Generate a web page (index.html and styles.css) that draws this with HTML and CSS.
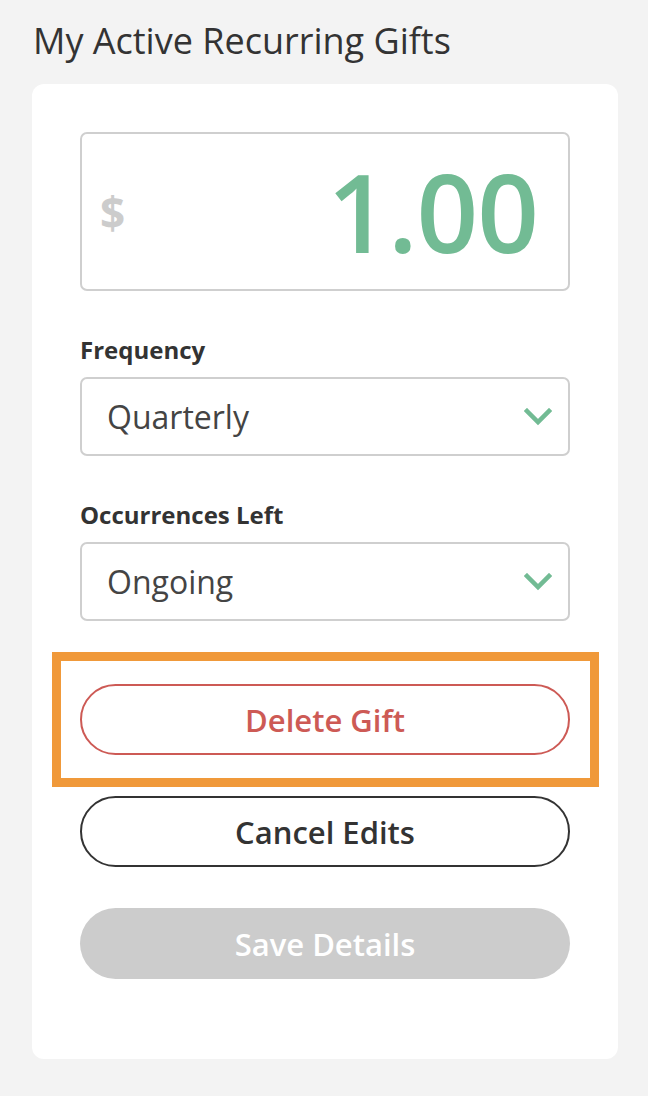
FILE: index.html
```html
<!DOCTYPE html>
<html lang="en">
<head>
    <meta charset="UTF-8">
    <meta name="viewport" content="width=device-width, initial-scale=1.0">
    <title>My Active Recurring Gifts</title>
    <link rel="stylesheet" href="styles.css">
</head>
<body>
    <div class="page">
        <h2 class="page-title">My Active Recurring Gifts</h2>

        <div class="gift-card">
            <div class="amount-box">
                <span class="currency">$</span>
                <span class="amount">1.00</span>
            </div>

            <label class="field-label">Frequency</label>
            <div class="select-box">
                <span>Quarterly</span>
                <svg class="chevron" viewBox="0 0 28 18" fill="none" stroke="#72bb94" stroke-width="4.5" stroke-linecap="square">
                    <path d="M3 3l11 11 11-11"></path>
                </svg>
            </div>

            <label class="field-label">Occurrences Left</label>
            <div class="select-box">
                <span>Ongoing</span>
                <svg class="chevron" viewBox="0 0 28 18" fill="none" stroke="#72bb94" stroke-width="4.5" stroke-linecap="square">
                    <path d="M3 3l11 11 11-11"></path>
                </svg>
            </div>

            <div class="actions">
                <div class="highlight">
                    <button class="btn btn-delete">Delete Gift</button>
                </div>
                <button class="btn btn-cancel">Cancel Edits</button>
                <button class="btn btn-save" disabled>Save Details</button>
            </div>
        </div>
    </div>
</body>
</html>
```

FILE: styles.css
```css
body {
    margin: 0;
    padding: 0;
    background-color: #f3f3f3;
    font-family: "Open Sans", Arial, sans-serif;
    color: #333;
}
.page {
    padding: 18px 30px 37px 32px;
}
.page-title {
    margin: 0 0 20px 1px;
    font-size: 36px;
    font-weight: 400;
    line-height: 46px;
    color: #333;
}
.gift-card {
    background: white;
    border-radius: 12px;
    padding: 48px 48px 80px 48px;
}
.amount-box {
    display: flex;
    align-items: center;
    justify-content: space-between;
    height: 155px;
    padding: 0 30px 0 18px;
    border: 2px solid #cfcfcf;
    border-radius: 7px;
}
.currency {
    font-size: 44px;
    font-weight: 700;
    color: #cccccc;
}
.amount {
    font-size: 108px;
    font-weight: 600;
    color: #72bb94;
    line-height: 1;
    letter-spacing: -1px;
}
.field-label {
    display: block;
    margin: 42px 0 11px 0;
    font-size: 24px;
    line-height: 33px;
    font-weight: 700;
    color: #333;
}
.select-box {
    display: flex;
    align-items: center;
    justify-content: space-between;
    height: 75px;
    padding: 0 16px 0 25px;
    border: 2px solid #cfcfcf;
    border-radius: 7px;
    font-size: 32px;
    color: #444;
}
.chevron {
    width: 28px;
    height: 18px;
}
.actions {
    display: flex;
    flex-direction: column;
    gap: 41px;
    margin-top: 63px;
}
.highlight {
    position: relative;
}
.highlight::before {
    content: "";
    position: absolute;
    top: -32px;
    bottom: -32px;
    left: -28px;
    right: -29px;
    border: 9px solid #f0993a;
}
.btn {
    display: block;
    width: 100%;
    height: 71px;
    border-radius: 36px;
    background: white;
    font-family: "Open Sans", Arial, sans-serif;
    font-size: 31px;
    font-weight: 600;
    cursor: pointer;
}
.btn-delete {
    border: 2px solid #cd5a55;
    color: #cd5a55;
}
.btn-cancel {
    border: 2px solid #333;
    color: #333;
}
.btn-save {
    border: none;
    background: #cccccc;
    color: white;
}
```
